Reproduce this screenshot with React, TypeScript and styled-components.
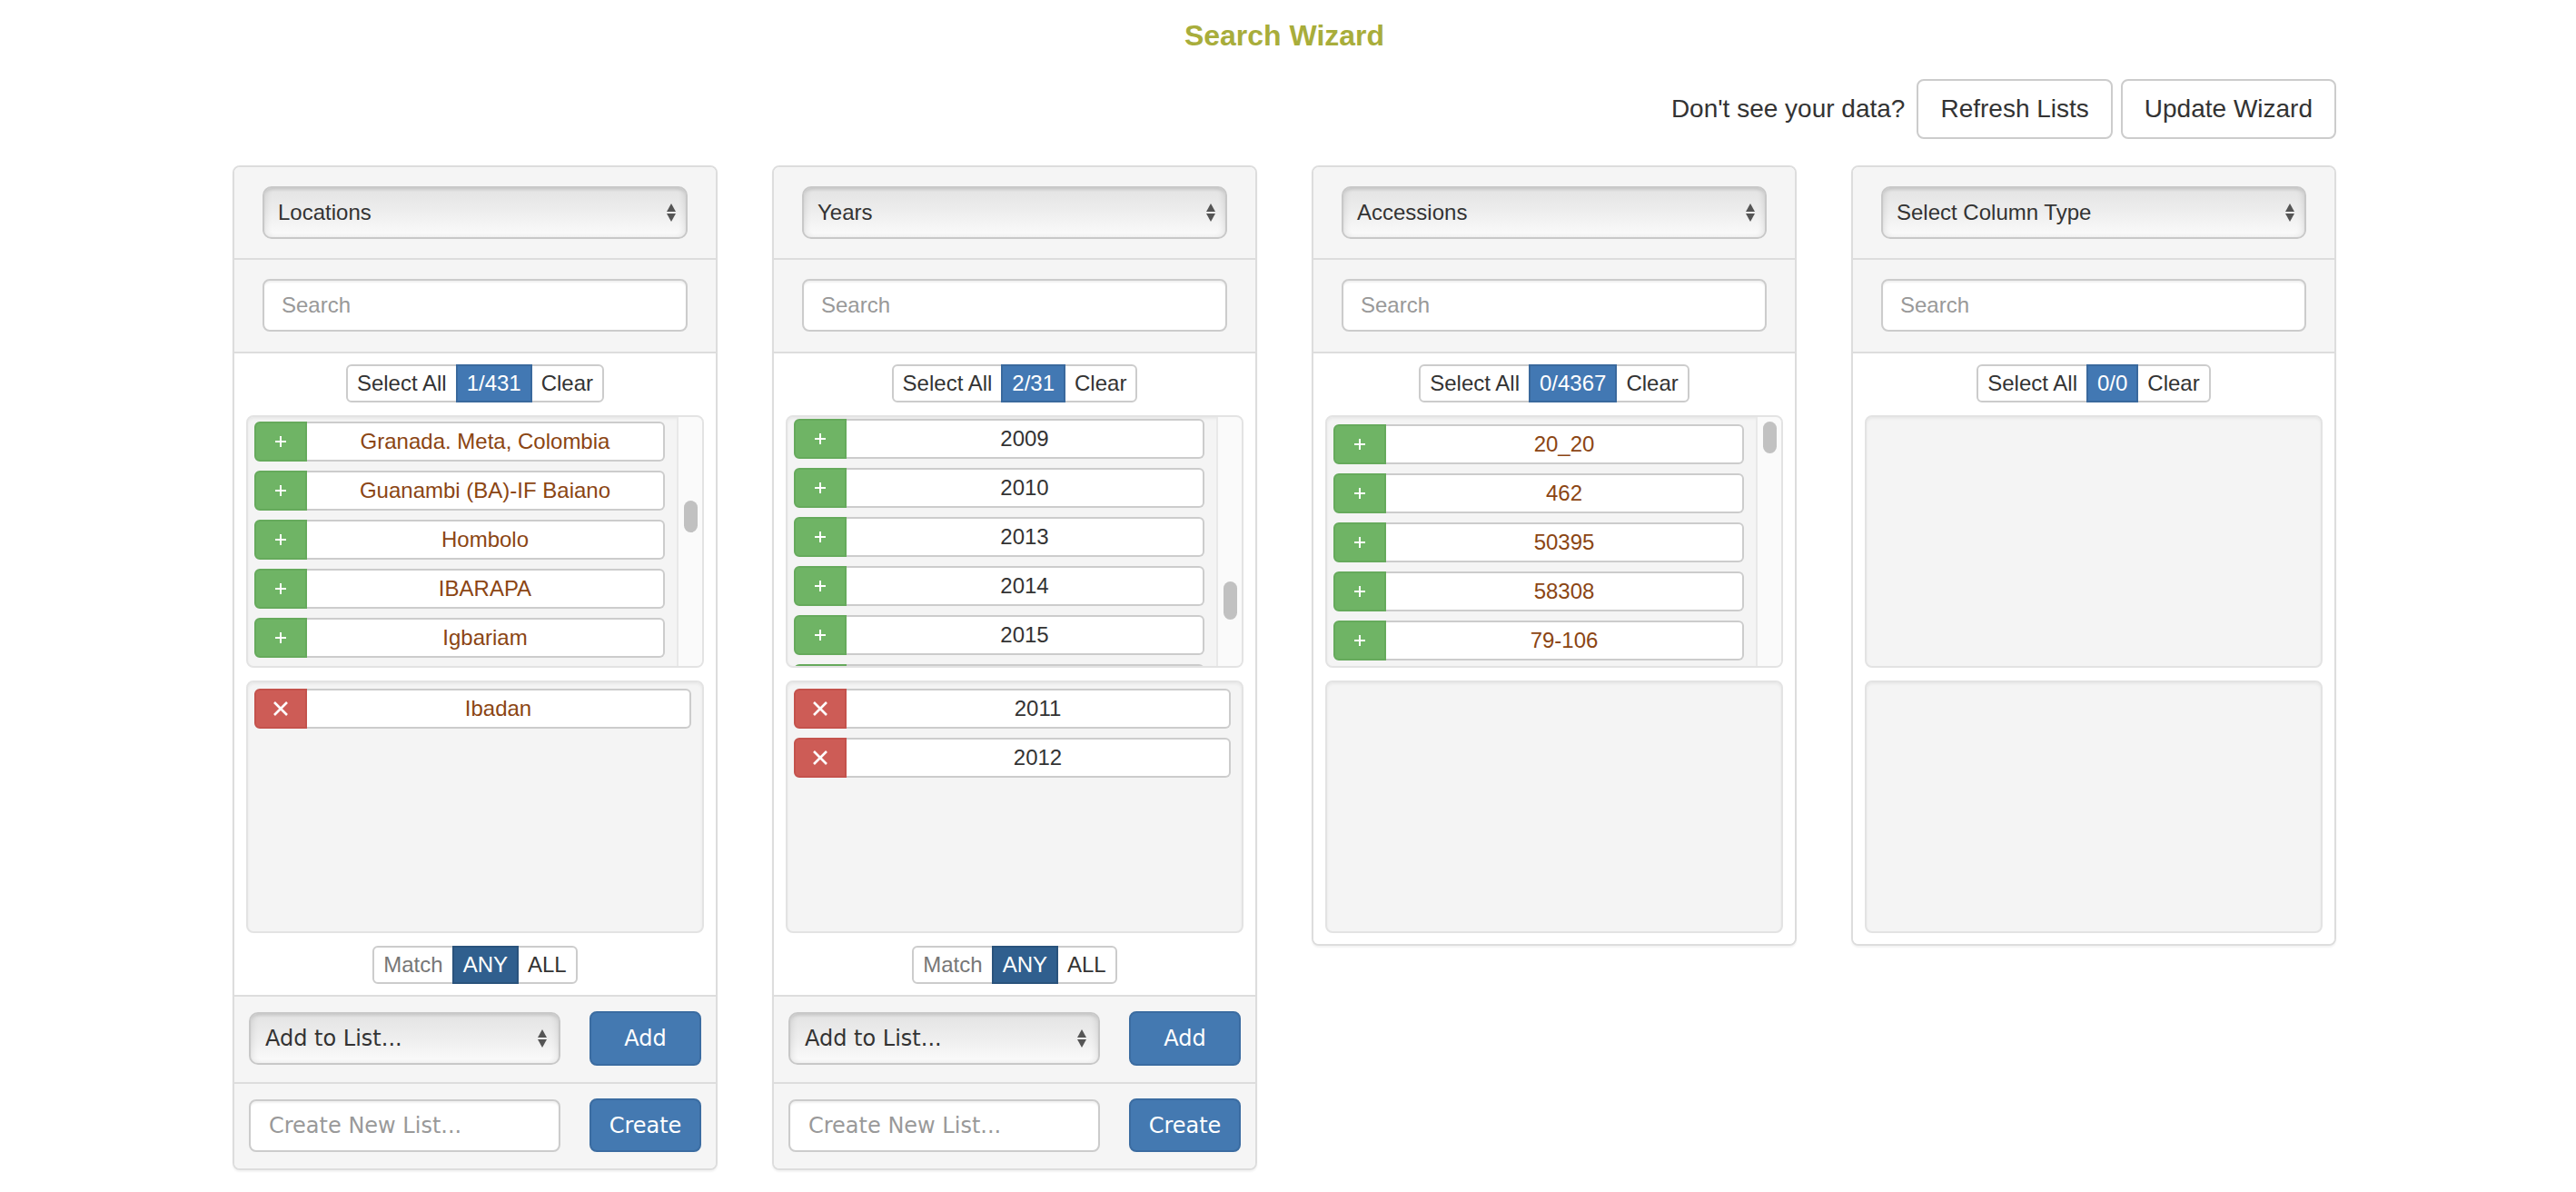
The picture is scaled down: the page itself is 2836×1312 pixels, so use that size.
import React from "react";
import styled, { createGlobalStyle } from "styled-components";

const colors = {
  text: "#333",
  muted: "#777",
  placeholder: "#999",
  line: "#ddd",
  field: "#ccc",
  panelGray: "#f5f5f5",
  well: "#f4f4f4",
  green: "#6fb465",
  greenEdge: "#66aa5c",
  red: "#cd5c56",
  redEdge: "#c4524c",
  blue: "#4479b1",
  blueEdge: "#3b6ca1",
  navy: "#305f8e",
  brown: "#8b4513",
  olive: "#a8ad3b",
};

const uiFont = `"Liberation Sans", Arial, Helvetica, sans-serif`;
const lucidaFont = `"DejaVu Sans", Verdana, sans-serif`;

const GlobalStyle = createGlobalStyle`
  * { box-sizing: border-box; }
  body {
    margin: 0;
    background: #fff;
    color: ${colors.text};
    font-family: ${uiFont};
  }
`;

const Page = styled.div`
  width: 2316px;
  margin-left: 256px;
  padding-bottom: 40px;
`;

const Title = styled.h1`
  margin: 19px 0 0;
  font-size: 32px;
  line-height: 40px;
  font-weight: bold;
  text-align: center;
  color: ${colors.olive};
`;

const Toolbar = styled.div`
  display: flex;
  justify-content: flex-end;
  align-items: center;
  gap: 9px;
  margin-top: 28px;
`;

const Hint = styled.span`
  font-size: 28px;
  margin-right: 4px;
`;

const ToolButton = styled.button`
  height: 66px;
  padding: 0 24px;
  font: 28px/40px ${uiFont};
  color: ${colors.text};
  background: #fff;
  border: 2px solid ${colors.field};
  border-radius: 8px;
`;

const Columns = styled.div`
  display: grid;
  grid-template-columns: repeat(4, 534px);
  column-gap: 60px;
  align-items: start;
  margin-top: 29px;
`;

const Panel = styled.section`
  border: 2px solid ${colors.line};
  border-radius: 8px;
  background: #fff;
  overflow: hidden;
  box-shadow: 0 2px 2px rgba(0, 0, 0, 0.05);
`;

const HeadSection = styled.div`
  padding: 21px 31px;
  background: ${colors.panelGray};
  & + & {
    border-top: 2px solid ${colors.line};
    padding-bottom: 22px;
  }
`;

const Picker = styled.div<{ $lucida?: boolean }>`
  display: flex;
  align-items: center;
  justify-content: space-between;
  height: 58px;
  padding: ${(p) => (p.$lucida ? "0 13px 0 16px" : "0 11px 0 15px")};
  border: 2px solid #c8c8c8;
  border-radius: 10px;
  background: linear-gradient(#e3e3e3, #eeeeee 50%, #fbfbfb);
  box-shadow: inset 0 2px 3px rgba(0, 0, 0, 0.07),
    inset 4px 0 5px rgba(0, 0, 0, 0.05), inset -4px 0 5px rgba(0, 0, 0, 0.05);
  font-family: ${(p) => (p.$lucida ? lucidaFont : uiFont)};
  font-size: 24px;
  color: ${colors.text};
`;

const SearchInput = styled.input`
  display: block;
  width: 100%;
  height: 58px;
  padding: 0 19px;
  font: 24px ${uiFont};
  color: ${colors.text};
  background: #fff;
  border: 2px solid ${colors.field};
  border-radius: 8px;
  box-shadow: inset 0 2px 2px rgba(0, 0, 0, 0.06);
  outline: none;
  &::placeholder {
    color: ${colors.placeholder};
  }
`;

const Body = styled.div`
  display: flex;
  flex-direction: column;
  gap: 14px;
  padding: 12px 13px 12px;
  border-top: 2px solid ${colors.line};
  background: #fff;
`;

const Segmented = styled.div`
  display: flex;
  justify-content: center;
`;

const Segment = styled.span<{ $fill?: string; $muted?: boolean }>`
  position: relative;
  height: 42px;
  padding: 0 10px;
  margin-left: -2px;
  font-size: 24px;
  line-height: 38px;
  color: ${(p) => (p.$fill ? "#fff" : p.$muted ? colors.muted : colors.text)};
  background: ${(p) => p.$fill || "#fff"};
  border: 2px solid ${(p) => (p.$fill ? "rgba(0,0,0,0.12)" : colors.field)};
  z-index: ${(p) => (p.$fill ? 1 : 0)};
  &:first-child {
    margin-left: 0;
    border-radius: 6px 0 0 6px;
  }
  &:last-child {
    border-radius: 0 6px 6px 0;
  }
`;

const ListBox = styled.div`
  display: flex;
  height: 278px;
  background: ${colors.well};
  border: 2px solid #e3e3e3;
  border-radius: 8px;
  box-shadow: inset 0 2px 3px rgba(0, 0, 0, 0.05);
  overflow: hidden;
`;

const Viewport = styled.div<{ $scrolling?: boolean }>`
  flex: 1;
  overflow: hidden;
  padding: ${(p) => (p.$scrolling ? "8px 13px 0 7px" : "7px 12px 7px 7px")};
`;

const Stack = styled.div<{ $scroll: number }>`
  display: flex;
  flex-direction: column;
  gap: 10px;
  margin-top: ${(p) => -p.$scroll}px;
`;

const Entry = styled.div`
  display: flex;
  flex-shrink: 0;
  height: 44px;
`;

const EntryAction = styled.span<{ $remove?: boolean }>`
  display: flex;
  align-items: center;
  justify-content: center;
  width: 58px;
  flex-shrink: 0;
  background: ${(p) => (p.$remove ? colors.red : colors.green)};
  border: 2px solid ${(p) => (p.$remove ? colors.redEdge : colors.greenEdge)};
  border-radius: 6px 0 0 6px;
`;

const EntryLabel = styled.span<{ $tone: string }>`
  flex: 1;
  display: flex;
  align-items: center;
  justify-content: center;
  background: #fff;
  border: 2px solid ${colors.field};
  border-left: none;
  border-radius: 0 6px 6px 0;
  font-size: 24px;
  color: ${(p) => p.$tone};
  white-space: nowrap;
`;

const ScrollTrack = styled.div`
  width: 28px;
  flex-shrink: 0;
  background: #fafafa;
  border-left: 2px solid #e8e8e8;
`;

const ScrollThumb = styled.div<{ $top: number; $size: number }>`
  width: 15px;
  height: ${(p) => p.$size}px;
  margin: ${(p) => p.$top}px 0 0 6px;
  border-radius: 8px;
  background: #c1c1c1;
`;

const FootRow = styled.div`
  display: flex;
  justify-content: space-between;
  align-items: center;
  padding: 16px 16px 18px;
  background: ${colors.panelGray};
  border-top: 2px solid ${colors.line};
`;

const FootPicker = styled(Picker)`
  width: 343px;
`;

const NameInput = styled.input`
  width: 343px;
  height: 58px;
  padding: 0 20px;
  font: 24px ${lucidaFont};
  color: ${colors.text};
  background: #fff;
  border: 2px solid ${colors.field};
  border-radius: 8px;
  box-shadow: inset 0 2px 2px rgba(0, 0, 0, 0.06);
  outline: none;
  &::placeholder {
    color: ${colors.placeholder};
  }
`;

const ActionButton = styled.button<{ $tall?: boolean }>`
  width: 123px;
  height: ${(p) => (p.$tall ? 60 : 59)}px;
  padding: 0;
  font: 24px ${lucidaFont};
  color: #fff;
  background: ${colors.blue};
  border: 2px solid ${colors.blueEdge};
  border-radius: 8px;
`;

const Arrows = () => (
  <svg width="10" height="20" viewBox="0 0 10 20">
    <polygon points="5,0 10,9 0,9" fill="#555" />
    <polygon points="0,11 10,11 5,20" fill="#555" />
  </svg>
);

const PlusIcon = () => (
  <svg width="14" height="14" viewBox="0 0 14 14">
    <path d="M7 1v12M1 7h12" stroke="#fff" strokeWidth="2" />
  </svg>
);

const CrossIcon = () => (
  <svg width="18" height="18" viewBox="0 0 18 18">
    <path d="M2 2l14 14M16 2L2 16" stroke="#fff" strokeWidth="2.6" />
  </svg>
);

interface ColumnData {
  type: string;
  count: string;
  tone: string;
  items: string[];
  selected: string[];
  scroll: number;
  thumb?: { top: number; size: number };
  full: boolean;
}

const columns: ColumnData[] = [
  {
    type: "Locations",
    count: "1/431",
    tone: colors.brown,
    items: [
      "Granada. Meta, Colombia",
      "Guanambi (BA)-IF Baiano",
      "Hombolo",
      "IBARAPA",
      "Igbariam",
    ],
    selected: ["Ibadan"],
    scroll: 3,
    thumb: { top: 92, size: 35 },
    full: true,
  },
  {
    type: "Years",
    count: "2/31",
    tone: colors.text,
    // the last row only peeks in at the bottom edge of the list
    items: ["2009", "2010", "2013", "2014", "2015", ""],
    selected: ["2011", "2012"],
    scroll: 6,
    thumb: { top: 181, size: 42 },
    full: true,
  },
  {
    type: "Accessions",
    count: "0/4367",
    tone: colors.brown,
    items: ["20_20", "462", "50395", "58308", "79-106"],
    selected: [],
    scroll: 0,
    thumb: { top: 5, size: 35 },
    full: false,
  },
  {
    type: "Select Column Type",
    count: "0/0",
    tone: colors.text,
    items: [],
    selected: [],
    scroll: 0,
    full: false,
  },
];

const WizardColumn: React.FC<{ data: ColumnData }> = ({ data }) => (
  <Panel>
    <HeadSection>
      <Picker>
        <span>{data.type}</span>
        <Arrows />
      </Picker>
    </HeadSection>
    <HeadSection>
      <SearchInput placeholder="Search" />
    </HeadSection>
    <Body>
      <Segmented>
        <Segment>Select All</Segment>
        <Segment $fill="#4278b3">{data.count}</Segment>
        <Segment>Clear</Segment>
      </Segmented>
      <ListBox>
        <Viewport $scrolling>
          <Stack $scroll={data.scroll}>
            {data.items.map((item, i) => (
              <Entry key={i}>
                <EntryAction>
                  <PlusIcon />
                </EntryAction>
                <EntryLabel $tone={data.tone}>{item}</EntryLabel>
              </Entry>
            ))}
          </Stack>
        </Viewport>
        {data.thumb && (
          <ScrollTrack>
            <ScrollThumb $top={data.thumb.top} $size={data.thumb.size} />
          </ScrollTrack>
        )}
      </ListBox>
      <ListBox>
        <Viewport>
          <Stack $scroll={0}>
            {data.selected.map((item) => (
              <Entry key={item}>
                <EntryAction $remove>
                  <CrossIcon />
                </EntryAction>
                <EntryLabel $tone={data.tone}>{item}</EntryLabel>
              </Entry>
            ))}
          </Stack>
        </Viewport>
      </ListBox>
      {data.full && (
        <Segmented>
          <Segment $muted>Match</Segment>
          <Segment $fill={colors.navy}>ANY</Segment>
          <Segment>ALL</Segment>
        </Segmented>
      )}
    </Body>
    {data.full && (
      <>
        <FootRow>
          <FootPicker $lucida>
            <span>Add to List...</span>
            <Arrows />
          </FootPicker>
          <ActionButton $tall>Add</ActionButton>
        </FootRow>
        <FootRow>
          <NameInput placeholder="Create New List..." />
          <ActionButton>Create</ActionButton>
        </FootRow>
      </>
    )}
  </Panel>
);

export default function App() {
  return (
    <>
      <GlobalStyle />
      <Page>
        <Title>Search Wizard</Title>
        <Toolbar>
          <Hint>Don't see your data?</Hint>
          <ToolButton>Refresh Lists</ToolButton>
          <ToolButton>Update Wizard</ToolButton>
        </Toolbar>
        <Columns>
          {columns.map((c) => (
            <WizardColumn key={c.type} data={c} />
          ))}
        </Columns>
      </Page>
    </>
  );
}
